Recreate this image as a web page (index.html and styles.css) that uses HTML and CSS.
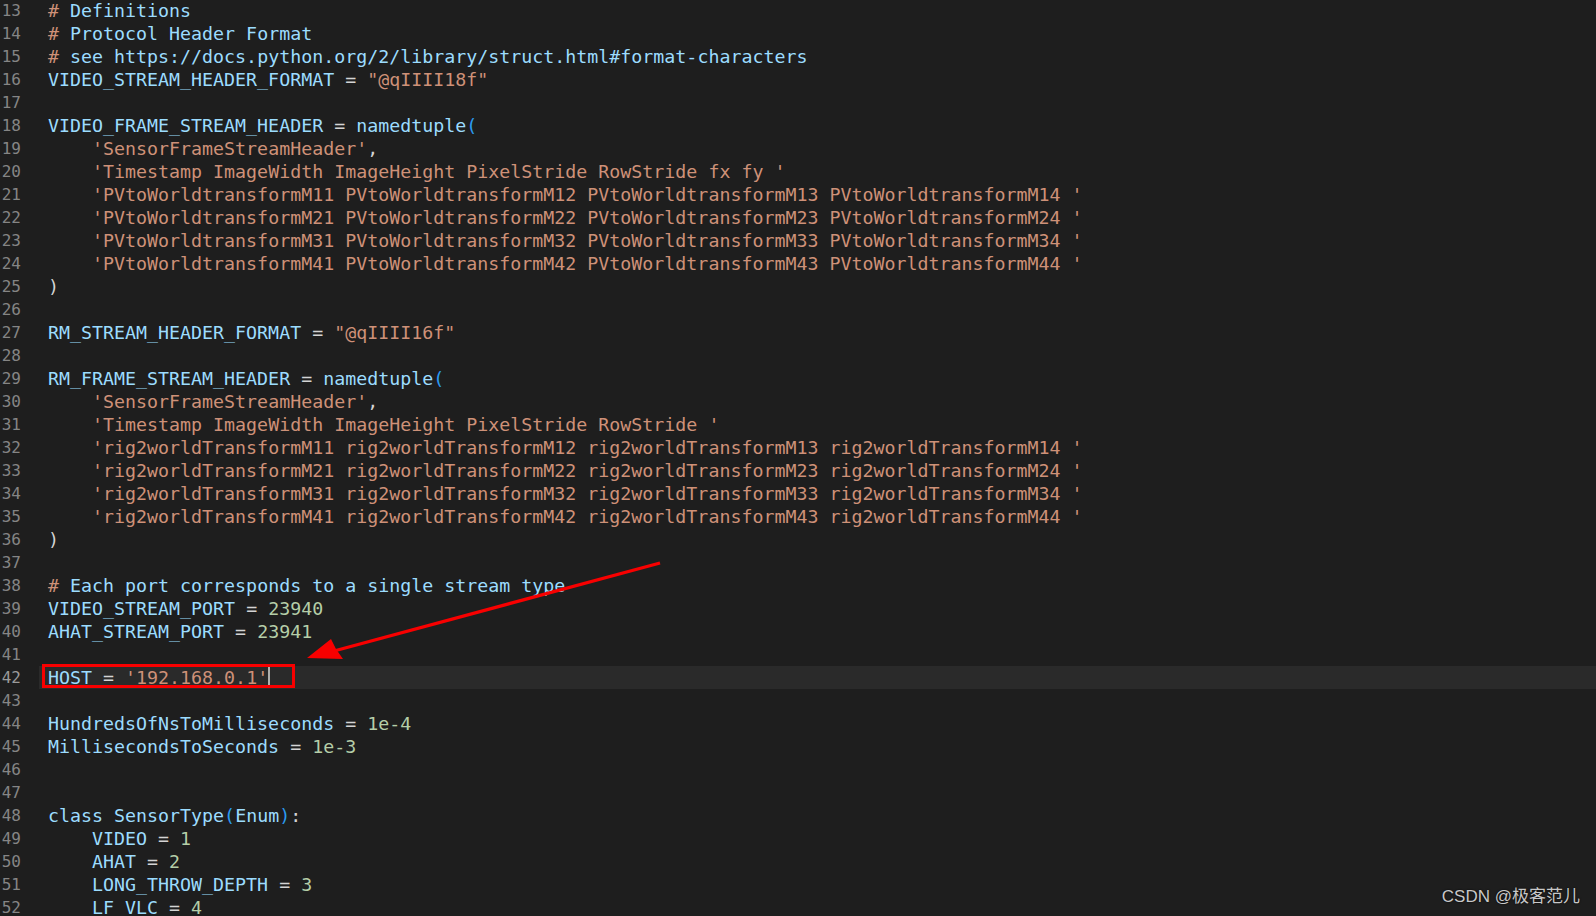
FILE: index.html
```html
<!DOCTYPE html>
<html lang="en">
<head>
    <meta charset="UTF-8">
    <title>HoloLens stream definitions</title>
    <link rel="stylesheet" href="styles.css">
</head>
<body>
    <div class="editor">
        <div class="row"><span class="ln">13</span><span class="code"><span class="h">#</span> Definitions</span></div>
        <div class="row"><span class="ln">14</span><span class="code"><span class="h">#</span> Protocol Header Format</span></div>
        <div class="row"><span class="ln">15</span><span class="code"><span class="h">#</span> see https://docs.python.org/2/library/struct.html#format-characters</span></div>
        <div class="row"><span class="ln">16</span><span class="code">VIDEO_STREAM_HEADER_FORMAT <span class="op">=</span> <span class="s">"@qIIII18f"</span></span></div>
        <div class="row"><span class="ln">17</span><span class="code"></span></div>
        <div class="row"><span class="ln">18</span><span class="code">VIDEO_FRAME_STREAM_HEADER <span class="op">=</span> namedtuple<span class="p">(</span></span></div>
        <div class="row"><span class="ln">19</span><span class="code">    <span class="s">'SensorFrameStreamHeader'</span><span class="op">,</span></span></div>
        <div class="row"><span class="ln">20</span><span class="code">    <span class="s">'Timestamp ImageWidth ImageHeight PixelStride RowStride fx fy '</span></span></div>
        <div class="row"><span class="ln">21</span><span class="code">    <span class="s">'PVtoWorldtransformM11 PVtoWorldtransformM12 PVtoWorldtransformM13 PVtoWorldtransformM14 '</span></span></div>
        <div class="row"><span class="ln">22</span><span class="code">    <span class="s">'PVtoWorldtransformM21 PVtoWorldtransformM22 PVtoWorldtransformM23 PVtoWorldtransformM24 '</span></span></div>
        <div class="row"><span class="ln">23</span><span class="code">    <span class="s">'PVtoWorldtransformM31 PVtoWorldtransformM32 PVtoWorldtransformM33 PVtoWorldtransformM34 '</span></span></div>
        <div class="row"><span class="ln">24</span><span class="code">    <span class="s">'PVtoWorldtransformM41 PVtoWorldtransformM42 PVtoWorldtransformM43 PVtoWorldtransformM44 '</span></span></div>
        <div class="row"><span class="ln">25</span><span class="code"><span class="op">)</span></span></div>
        <div class="row"><span class="ln">26</span><span class="code"></span></div>
        <div class="row"><span class="ln">27</span><span class="code">RM_STREAM_HEADER_FORMAT <span class="op">=</span> <span class="s">"@qIIII16f"</span></span></div>
        <div class="row"><span class="ln">28</span><span class="code"></span></div>
        <div class="row"><span class="ln">29</span><span class="code">RM_FRAME_STREAM_HEADER <span class="op">=</span> namedtuple<span class="p">(</span></span></div>
        <div class="row"><span class="ln">30</span><span class="code">    <span class="s">'SensorFrameStreamHeader'</span><span class="op">,</span></span></div>
        <div class="row"><span class="ln">31</span><span class="code">    <span class="s">'Timestamp ImageWidth ImageHeight PixelStride RowStride '</span></span></div>
        <div class="row"><span class="ln">32</span><span class="code">    <span class="s">'rig2worldTransformM11 rig2worldTransformM12 rig2worldTransformM13 rig2worldTransformM14 '</span></span></div>
        <div class="row"><span class="ln">33</span><span class="code">    <span class="s">'rig2worldTransformM21 rig2worldTransformM22 rig2worldTransformM23 rig2worldTransformM24 '</span></span></div>
        <div class="row"><span class="ln">34</span><span class="code">    <span class="s">'rig2worldTransformM31 rig2worldTransformM32 rig2worldTransformM33 rig2worldTransformM34 '</span></span></div>
        <div class="row"><span class="ln">35</span><span class="code">    <span class="s">'rig2worldTransformM41 rig2worldTransformM42 rig2worldTransformM43 rig2worldTransformM44 '</span></span></div>
        <div class="row"><span class="ln">36</span><span class="code"><span class="op">)</span></span></div>
        <div class="row"><span class="ln">37</span><span class="code"></span></div>
        <div class="row"><span class="ln">38</span><span class="code"><span class="h">#</span> Each port corresponds to a single stream type</span></div>
        <div class="row"><span class="ln">39</span><span class="code">VIDEO_STREAM_PORT <span class="op">=</span> <span class="n">23940</span></span></div>
        <div class="row"><span class="ln">40</span><span class="code">AHAT_STREAM_PORT <span class="op">=</span> <span class="n">23941</span></span></div>
        <div class="row"><span class="ln">41</span><span class="code"></span></div>
        <div class="row current"><span class="ln">42</span><span class="code">HOST <span class="op">=</span> <span class="s">'192.168.0.1'</span><span class="cursor"></span></span></div>
        <div class="row"><span class="ln">43</span><span class="code"></span></div>
        <div class="row"><span class="ln">44</span><span class="code">HundredsOfNsToMilliseconds <span class="op">=</span> <span class="n">1e-4</span></span></div>
        <div class="row"><span class="ln">45</span><span class="code">MillisecondsToSeconds <span class="op">=</span> <span class="n">1e-3</span></span></div>
        <div class="row"><span class="ln">46</span><span class="code"></span></div>
        <div class="row"><span class="ln">47</span><span class="code"></span></div>
        <div class="row"><span class="ln">48</span><span class="code">class SensorType<span class="p">(</span>Enum<span class="p">)</span><span class="op">:</span></span></div>
        <div class="row"><span class="ln">49</span><span class="code">    VIDEO <span class="op">=</span> <span class="n">1</span></span></div>
        <div class="row"><span class="ln">50</span><span class="code">    AHAT <span class="op">=</span> <span class="n">2</span></span></div>
        <div class="row"><span class="ln">51</span><span class="code">    LONG_THROW_DEPTH <span class="op">=</span> <span class="n">3</span></span></div>
        <div class="row"><span class="ln">52</span><span class="code">    LF_VLC <span class="op">=</span> <span class="n">4</span></span></div>
    </div>

    <!-- annotation drawn over the screenshot -->
    <div class="mark-box"></div>
    <svg class="arrow" width="1596" height="916" viewBox="0 0 1596 916">
        <line x1="660" y1="563" x2="334" y2="651" stroke="#f80000" stroke-width="3.2"/>
        <polygon points="307,658 343,659 336,649 331,639" fill="#f80000"/>
    </svg>

    <div class="watermark">CSDN @极客范儿</div>
</body>
</html>
```

FILE: styles.css
```css
body {
    margin: 0;
    background: #1e1e1e;
    overflow: hidden;
    height: 916px;
    position: relative;
}

.editor {
    margin-top: -1px;
    font-family: "DejaVu Sans Mono", monospace;
    font-size: 18.3px;
    line-height: 23px;
    color: #9cdcfe;
}

.row {
    display: flex;
    height: 23px;
}

.ln {
    width: 21px;
    margin-right: 18px;
    padding-top: 1px;
    text-align: right;
    font-size: 16px;
    line-height: 22px;
    color: #858585;
    flex-shrink: 0;
}

.code {
    flex: 1;
    padding-left: 9px;
    white-space: pre;
}

.current .code {
    background: #2a2a2a;
}

.current .ln {
    color: #9a9a9a;
}

.cursor {
    display: inline-block;
    width: 2px;
    height: 21px;
    vertical-align: top;
    margin-top: 1px;
    background: #aeafad;
}

.h { color: #ce9178; }
.s { color: #ce9178; }
.n { color: #b5cea8; }
.op { color: #d4d4d4; }
.p { color: #2b9bf0; }

.mark-box {
    position: absolute;
    left: 42px;
    top: 664px;
    width: 247px;
    height: 18px;
    border: 3px solid #f80000;
}

.arrow {
    position: absolute;
    left: 0;
    top: 0;
}

.watermark {
    position: absolute;
    right: 16px;
    bottom: 9px;
    font-family: "Liberation Sans", "Noto Sans CJK SC", sans-serif;
    font-size: 17px;
    color: #c8c8c8;
    text-shadow: 0 0 2px #000;
}
```
